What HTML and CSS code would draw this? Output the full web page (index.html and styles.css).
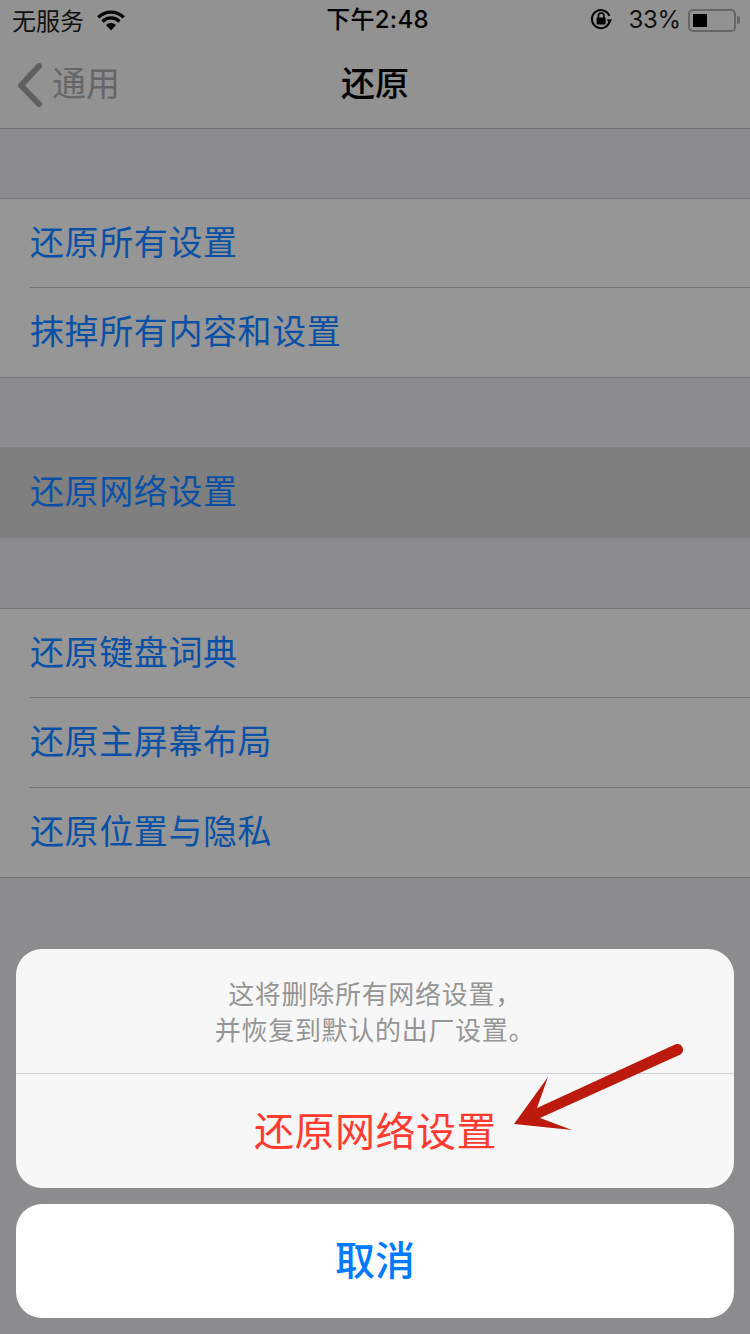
FILE: index.html
```html
<!DOCTYPE html>
<html lang="zh-CN">
<head>
<meta charset="utf-8">
<title>还原</title>
<link rel="stylesheet" href="styles.css">
</head>
<body>
<div class="screen">
  <header class="status">
    <div class="status-left">
      <span>无服务</span>
      <svg class="wifi" width="28" height="21" viewBox="0 0 28 21"><path d="M14 20.500 9 15a7 7 0 0 1 10 0Z" fill="#000"/><path d="M5.500 11.500a12 12 0 0 1 17 0M1.300 7.300a18 18 0 0 1 25.400 0" fill="none" stroke="#000" stroke-width="3.200"/></svg>
    </div>
    <div class="status-time">下午2:48</div>
    <div class="status-right">
      <svg class="lock" width="24" height="22" viewBox="0 0 24 22"><path d="M19.600 13.600A9 9 0 1 1 19.400 8" fill="none" stroke="#000" stroke-width="2"/><path d="m16.600 11.400 5.600-.2-2.600 4.600Z" fill="#000"/><rect x="6.600" y="9.600" width="9" height="7" rx="1" fill="#000"/><path d="M8.400 10V7.800a2.800 2.800 0 0 1 5.600 0V10" fill="none" stroke="#000" stroke-width="1.600"/></svg>
      <span class="pct">33%</span>
      <div class="battery"><div class="level"></div></div>
      <div class="nub"></div>
    </div>
  </header>
  <nav class="nav">
    <div class="back">
      <svg width="28" height="44" viewBox="0 0 28 44"><path d="M24 3 6 22.500l18 18.500" fill="none" stroke="#5f5f5f" stroke-width="6" stroke-linecap="round" stroke-linejoin="round"/></svg>
      <span>通用</span>
    </div>
    <h1 class="title">还原</h1>
  </nav>
  <div class="gap"></div>
  <ul class="group">
    <li class="row">还原所有设置</li>
    <li class="row">抹掉所有内容和设置</li>
  </ul>
  <div class="gap"></div>
  <ul class="group flat">
    <li class="row active">还原网络设置</li>
  </ul>
  <div class="gap tall"></div>
  <ul class="group">
    <li class="row">还原键盘词典</li>
    <li class="row">还原主屏幕布局</li>
    <li class="row">还原位置与隐私</li>
  </ul>
  <div class="sheet">
    <div class="card">
      <p class="msg">这将删除所有网络设置，<br>并恢复到默认的出厂设置。</p>
      <div class="action">还原网络设置</div>
    </div>
    <div class="cancel">取消</div>
  </div>
  <svg class="arrow" width="190" height="100" viewBox="0 0 190 100"><path d="M4 84 38 37 27 68 164 5a5.600 5.600 0 0 1 6.500 9.600L30 78 62 90Z" fill="#bb1a0c"/></svg>
</div>
</body>
</html>
```

FILE: styles.css
```css
* { box-sizing: border-box; }
html, body { margin: 0; padding: 0; }
body { width: 750px; height: 1334px; overflow: hidden; font-family: "Noto Sans CJK SC", "Inter", sans-serif; }
.screen { position: relative; width: 750px; height: 1334px; background: #8c8c8f; overflow: hidden; }
.status { height: 40px; background: #929292; display: flex; align-items: center; justify-content: space-between; padding: 0 12px; color: #000; position: relative; }
.status-left { display: flex; align-items: center; gap: 13px; font-size: 24px; line-height: 40px; color: #111; }
.status-time { position: absolute; left: 5px; right: 0; text-align: center; font-family: "Inter", "Noto Sans CJK SC", sans-serif; font-size: 24px; font-weight: 500; line-height: 40px; letter-spacing: .3px; pointer-events: none; }
.status-right { display: flex; align-items: center; }
.lock { margin-right: 14px; margin-top: -2px; }
.pct { font-family: "Inter", sans-serif; font-size: 24px; letter-spacing: -.2px; line-height: 40px; margin-right: 7px; color: #111; }
.battery { width: 48px; height: 23px; border: 2px solid #666; border-radius: 5px; padding: 3px; }
.level { width: 14px; height: 100%; background: #000; }
.nub { width: 3px; height: 8px; margin-left: 1px; margin-right: -2px; background: #666; border-radius: 0 3px 3px 0; }
.nav { height: 89px; background: #929292; border-bottom: 1px solid #6f6f6f; position: relative; display: flex; align-items: center; justify-content: center; padding-bottom: 4px; }
.back { position: absolute; left: 17px; top: 0; bottom: 4px; display: flex; align-items: center; gap: 7px; color: #666; font-size: 34px; line-height: 44px; }
.back svg { margin-top: 5px; margin-left: -2px; margin-right: 2px; }
.title { margin: 0; font-size: 34px; font-weight: 500; line-height: 44px; color: #000; }
.gap { height: 69px; background: #8c8c8f; }
.gap.tall { height: 70px; }
.group { list-style: none; margin: 0; padding: 0; background: #969696; border-top: 1px solid #747474; border-bottom: 1px solid #747474; }
.group.flat { border: 0; }
.row { height: 88px; margin-left: 30px; padding: 0 0 6px 0; display: flex; align-items: center; font-size: 34px; letter-spacing: .6px; color: #0a51a6; }
.row + .row { height: 90px; border-top: 1px solid #747474; }
.row.active { height: 91px; margin-left: 0; padding-left: 30px; background: #7f7f7f; }
.sheet { position: absolute; left: 16px; right: 16px; top: 949px; display: flex; flex-direction: column; gap: 16px; }
.card { height: 239px; background: #f7f7f7; border-radius: 26px; display: flex; flex-direction: column; }
.msg { margin: 0; height: 125px; padding-top: 26px; border-bottom: 1px solid #cfcfcf; text-align: center; font-size: 26px; letter-spacing: .7px; line-height: 36px; color: #959595; }
.action { flex: 1; display: flex; align-items: center; justify-content: center; padding: 0 0 4px 1px; font-size: 40px; letter-spacing: .5px; color: #ff3b30; }
.cancel { height: 114px; background: #fff; border-radius: 26px; display: flex; align-items: center; justify-content: center; padding-bottom: 6px; font-size: 40px; font-weight: 500; color: #007aff; }
.arrow { position: absolute; left: 510px; top: 1040px; }
```
